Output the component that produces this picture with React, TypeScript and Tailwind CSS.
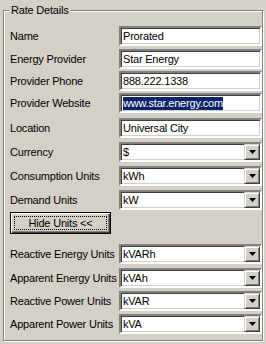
import React from 'react';

const sunken =
  'border-2 border-t-[#808080] border-l-[#808080] border-b-white border-r-white shadow-[inset_1px_1px_0_#404040,inset_-1px_-1px_0_#d4d0c8]';

const TextRow = ({ label, value, selected, mt }: { label: string; value: string; selected?: boolean; mt: string }) => (
  <div className={`flex items-center ${mt}`}>
    <span className="w-[109px] shrink-0">{label}</span>
    <div className={`w-[143px] h-[20px] bg-white flex items-center pl-[2px] ${sunken}`}>
      {selected ? <span className="bg-[#0a246a] text-white leading-[13px]">{value}</span> : <span>{value}</span>}
    </div>
  </div>
);

const ComboRow = ({ label, value, mt }: { label: string; value: string; mt: string }) => (
  <div className={`flex items-center ${mt}`}>
    <span className="w-[109px] shrink-0 whitespace-nowrap">{label}</span>
    <div className={`w-[143px] h-[20px] bg-white flex items-center pl-[2px] ${sunken}`}>
      <span className="flex-1">{value}</span>
      {/* dropdown button */}
      <div className="w-[16px] h-[16px] bg-[#d4d0c8] border border-t-[#d4d0c8] border-l-[#d4d0c8] border-b-[#404040] border-r-[#404040] shadow-[inset_1px_1px_0_#fff,inset_-1px_-1px_0_#808080] flex items-center justify-center">
        <svg width="7" height="4" viewBox="0 0 7 4">
          <path d="M0 0h7L3.5 4z" fill="#000" />
        </svg>
      </div>
    </div>
  </div>
);

export default function App() {
  return (
    <div
      className="w-[266px] h-[344px] bg-[#d4d0c8] pt-[10px] pl-[3px] text-[11px] tracking-[-0.2px] text-black"
      style={{ fontFamily: '"Liberation Sans", Arial, sans-serif' }}
    >
      <div className="relative w-[260px] h-[331px] border border-[#808080] shadow-[inset_1px_1px_0_#fff,1px_1px_0_#fff] pl-[6px] pt-[15px]">
        <span className="absolute left-[5px] top-[-8px] px-[2px] bg-[#d4d0c8] leading-[14px]">Rate Details</span>

        <TextRow label="Name" value="Prorated" mt="mt-0" />
        <TextRow label="Energy Provider" value="Star Energy" mt="mt-[3px]" />
        <TextRow label="Provider Phone" value="888.222.1338" mt="mt-[2px]" />
        <TextRow label="Provider Website" value="www.star.energy.com" selected mt="mt-[2px]" />
        <TextRow label="Location" value="Universal City" mt="mt-[5px]" />

        <ComboRow label="Currency" value="$" mt="mt-[4px]" />
        <ComboRow label="Consumption Units" value="kWh" mt="mt-[4px]" />
        <ComboRow label="Demand Units" value="kW" mt="mt-[4px]" />

        <div className="mt-[2px] w-[101px] h-[22px] border border-black bg-[#d4d0c8] shadow-[inset_1px_1px_0_#fff,inset_-1px_-1px_0_#404040,inset_-2px_-2px_0_#808080] flex items-center justify-center">
          <div className="w-[93px] h-[14px] border border-dotted border-black flex items-center justify-center leading-[12px]">
            Hide Units &lt;&lt;
          </div>
        </div>

        <ComboRow label="Reactive Energy Units" value="kVARh" mt="mt-[10px]" />
        <ComboRow label="Apparent Energy Units" value="kVAh" mt="mt-[4px]" />
        <ComboRow label="Reactive Power Units" value="kVAR" mt="mt-[3px]" />
        <ComboRow label="Apparent Power Units" value="kVA" mt="mt-[3px]" />
      </div>
    </div>
  );
}
